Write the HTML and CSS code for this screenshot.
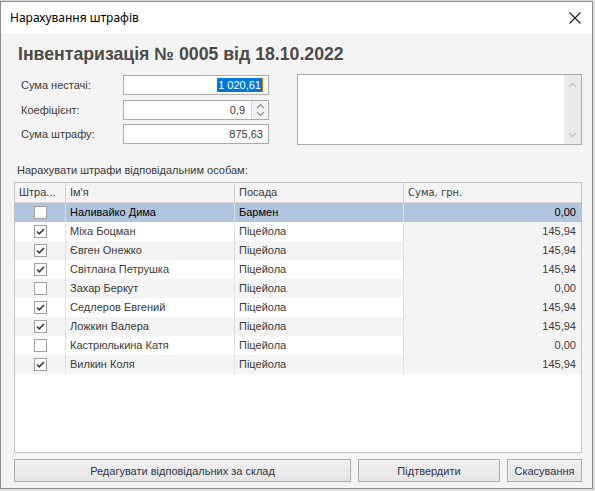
FILE: index.html
```html
<!DOCTYPE html>
<html lang="uk">
<head>
<meta charset="utf-8">
<title>Нарахування штрафів</title>
<link rel="stylesheet" href="styles.css">
</head>
<body>
<div class="window">
  <div class="titlebar">
    <span class="title">Нарахування штрафів</span>
    <svg class="close" width="12" height="12" viewBox="0 0 12 12"><path d="M0.5 0.5 L11.5 11.5 M11.5 0.5 L0.5 11.5" stroke="#1a1a1a" stroke-width="1.1" fill="none"/></svg>
  </div>
  <div class="content">
    <h1 class="heading">Інвентаризація № 0005 від 18.10.2022</h1>
    <div class="top">
      <div class="form">
        <div class="field">
          <span class="label">Сума нестачі:</span>
          <div class="input"><span class="sel">1 020,61</span><span class="caret"></span></div>
        </div>
        <div class="field">
          <span class="label">Коефіцієнт:</span>
          <div class="input spin-input"><span class="val">0,9</span>
            <div class="spin">
              <svg width="9" height="6" viewBox="0 0 9 6"><path d="M1 5 L4.5 1.5 L8 5" stroke="#8a8a8a" stroke-width="1.2" fill="none"/></svg>
              <svg width="9" height="6" viewBox="0 0 9 6"><path d="M1 1 L4.5 4.5 L8 1" stroke="#8a8a8a" stroke-width="1.2" fill="none"/></svg>
            </div>
          </div>
        </div>
        <div class="field">
          <span class="label">Сума штрафу:</span>
          <div class="input"><span class="val">875,63</span></div>
        </div>
      </div>
      <div class="memo">
        <div class="memo-text"></div>
        <div class="vscroll">
          <svg width="9" height="6" viewBox="0 0 9 6"><path d="M1 5 L4.5 1.5 L8 5" stroke="#c4c4c4" stroke-width="1.4" fill="none"/></svg>
          <svg width="9" height="6" viewBox="0 0 9 6"><path d="M1 1 L4.5 4.5 L8 1" stroke="#c4c4c4" stroke-width="1.4" fill="none"/></svg>
        </div>
      </div>
    </div>
    <div class="caption">Нарахувати штрафи відповідальним особам:</div>
    <div class="grid">
      <div class="row head">
        <div class="c c1">Штра...</div>
        <div class="c c2">Ім'я</div>
        <div class="c c3">Посада</div>
        <div class="c c4 sm">Сума, грн.</div>
      </div>
      <div class="row selected">
        <div class="c c1"><span class="cb"></span></div>
        <div class="c c2">Наливайко Дима</div>
        <div class="c c3">Бармен</div>
        <div class="c c4 num">0,00</div>
      </div>
      <div class="row even">
        <div class="c c1"><span class="cb on"><svg width="11" height="11" viewBox="0 0 11 11"><path d="M2 5.5 L4.3 7.8 L9 3" stroke="#3a3a3a" stroke-width="1.6" fill="none"/></svg></span></div>
        <div class="c c2">Міха Боцман</div>
        <div class="c c3">Піцейола</div>
        <div class="c c4 num">145,94</div>
      </div>
      <div class="row odd">
        <div class="c c1"><span class="cb on"><svg width="11" height="11" viewBox="0 0 11 11"><path d="M2 5.5 L4.3 7.8 L9 3" stroke="#3a3a3a" stroke-width="1.6" fill="none"/></svg></span></div>
        <div class="c c2">Євген Онежко</div>
        <div class="c c3">Піцейола</div>
        <div class="c c4 num">145,94</div>
      </div>
      <div class="row even">
        <div class="c c1"><span class="cb on"><svg width="11" height="11" viewBox="0 0 11 11"><path d="M2 5.5 L4.3 7.8 L9 3" stroke="#3a3a3a" stroke-width="1.6" fill="none"/></svg></span></div>
        <div class="c c2">Світлана Петрушка</div>
        <div class="c c3">Піцейола</div>
        <div class="c c4 num">145,94</div>
      </div>
      <div class="row odd">
        <div class="c c1"><span class="cb"></span></div>
        <div class="c c2">Захар Беркут</div>
        <div class="c c3">Піцейола</div>
        <div class="c c4 num">0,00</div>
      </div>
      <div class="row even">
        <div class="c c1"><span class="cb on"><svg width="11" height="11" viewBox="0 0 11 11"><path d="M2 5.5 L4.3 7.8 L9 3" stroke="#3a3a3a" stroke-width="1.6" fill="none"/></svg></span></div>
        <div class="c c2">Седлеров Евгений</div>
        <div class="c c3">Піцейола</div>
        <div class="c c4 num">145,94</div>
      </div>
      <div class="row odd">
        <div class="c c1"><span class="cb on"><svg width="11" height="11" viewBox="0 0 11 11"><path d="M2 5.5 L4.3 7.8 L9 3" stroke="#3a3a3a" stroke-width="1.6" fill="none"/></svg></span></div>
        <div class="c c2">Ложкин Валера</div>
        <div class="c c3">Піцейола</div>
        <div class="c c4 num">145,94</div>
      </div>
      <div class="row even">
        <div class="c c1"><span class="cb"></span></div>
        <div class="c c2">Кастрюлькина Катя</div>
        <div class="c c3">Піцейола</div>
        <div class="c c4 num">0,00</div>
      </div>
      <div class="row odd">
        <div class="c c1"><span class="cb on"><svg width="11" height="11" viewBox="0 0 11 11"><path d="M2 5.5 L4.3 7.8 L9 3" stroke="#3a3a3a" stroke-width="1.6" fill="none"/></svg></span></div>
        <div class="c c2">Вилкин Коля</div>
        <div class="c c3">Піцейола</div>
        <div class="c c4 num">145,94</div>
      </div>
    </div>
    <div class="buttons">
      <button class="btn b1">Редагувати відповідальних за склад</button>
      <button class="btn b2">Підтвердити</button>
      <button class="btn b3">Скасування</button>
    </div>
  </div>
</div>
</body>
</html>
```
FILE: styles.css
```css
* { box-sizing: border-box; }
html, body { margin: 0; padding: 0; }
body {
  width: 595px;
  height: 491px;
  background: #dcdcdc;
  font-family: "Liberation Sans", Arial, sans-serif;
  font-size: 11px;
  color: #3c3a38;
  overflow: hidden;
}
.window {
  margin-top: 1px;
  width: 593px;
  height: 488px;
  border: 1px solid #8c8c8c;
  background: #f4f4f4;
  display: flex;
  flex-direction: column;
}
.titlebar {
  height: 31px;
  flex: none;
  background: #ffffff;
  display: flex;
  align-items: center;
  justify-content: space-between;
  padding: 0 10px 0 9px;
}
.title {
  font-family: "Noto Sans", "Open Sans", sans-serif;
  font-size: 12px;
  color: #000;
}
.close { margin-right: 1px; }
.content {
  padding: 0 10px 0 13px;
  display: flex;
  flex-direction: column;
}
.heading {
  margin: 11px 0 0 4px;
  font-size: 17.7px;
  font-weight: bold;
  color: #4d4a47;
  line-height: 20px;
  height: 20px;
}
.top {
  display: flex;
  margin-top: 10px;
  height: 71px;
}
.form {
  width: 269px;
  flex: none;
  padding-top: 1px;
  display: flex;
  flex-direction: column;
  gap: 4.5px;
}
.field {
  display: flex;
  align-items: center;
  height: 20px;
}
.label {
  width: 109px;
  padding-left: 7px;
  flex: none;
}
.input {
  width: 146px;
  height: 20px;
  background: #fff;
  border: 1px solid #ababab;
  display: flex;
  align-items: center;
  justify-content: flex-end;
  padding-right: 5px;
  position: relative;
}
.sel {
  background: #0078d7;
  color: #fff;
  line-height: 14px;
  padding: 0 1px;
}
.caret {
  width: 1px;
  height: 14px;
  background: #d07000;
}
.spin-input { padding-right: 0; }
.spin-input .val { margin-right: 6px; }
.spin {
  width: 17px;
  height: 18px;
  border-left: 1px solid #d4d4d4;
  background: #f2f2f2;
  display: flex;
  flex-direction: column;
  align-items: center;
  justify-content: space-around;
  padding: 1px 0;
}
.memo {
  margin-left: 14px;
  width: 298px;
  height: 71px;
  border: 1px solid #ababab;
  background: #fff;
  display: flex;
}
.memo-text { flex: 1; }
.vscroll {
  width: 17px;
  background: #eaeaea;
  display: flex;
  flex-direction: column;
  align-items: center;
  justify-content: space-between;
  padding: 7px 0 6px;
}
.caption {
  margin: 18px 0 0 3px;
  height: 14px;
  line-height: 14px;
}
.grid {
  margin: 5px 0 0 0;
  width: 568px;
  height: 271px;
  border: 1px solid #c4c4c4;
  background: #fff;
}
.row {
  display: flex;
  height: 19px;
}
.c {
  height: 19px;
  line-height: 19px;
  padding: 0 4px;
  white-space: nowrap;
  overflow: hidden;
  border-right: 1px solid #e0e0e0;
}
.c1 { width: 51px; text-align: center; padding: 0; display: flex; align-items: center; justify-content: center; }
.c2 { width: 169px; }
.c3 { width: 169px; }
.c4 { flex: 1; border-right: none; background: #f4f4f4; }
.num { text-align: right; padding-right: 5px; }
.head {
  background: #f4f4f4;
  height: 20px;
  border-bottom: 1px solid #d6d6d6;
}
.head .c { border-right: 1px solid #d0d0d0; height: 19px; line-height: 19px; }
.head .c1 { justify-content: flex-start; padding-left: 4px; }
.head .c4 { border-right: none; }
.sm { font-family: "DejaVu Sans", sans-serif; font-size: 10px; }
.odd { background: #f4f4f4; }
.even { background: #fff; }
.selected { background: #b0c4de; color: #000; }
.selected .c4 { background: #b0c4de; }
.cb {
  width: 13px;
  height: 13px;
  border: 1px solid #a0a0a0;
  background: #fff;
  display: flex;
  align-items: center;
  justify-content: center;
}
.buttons {
  display: flex;
  margin: 6px 0 0 0;
  width: 568px;
  gap: 7px;
}
.btn {
  height: 23px;
  border: 1px solid #adadad;
  background: linear-gradient(#f0f0f0, #e5e5e5);
  font-family: "Liberation Sans", Arial, sans-serif;
  font-size: 11px;
  color: #33334a;
  padding: 0;
}
.b1 { width: 337px; }
.b2 { width: 142px; }
.b3 { flex: 1; }
```
